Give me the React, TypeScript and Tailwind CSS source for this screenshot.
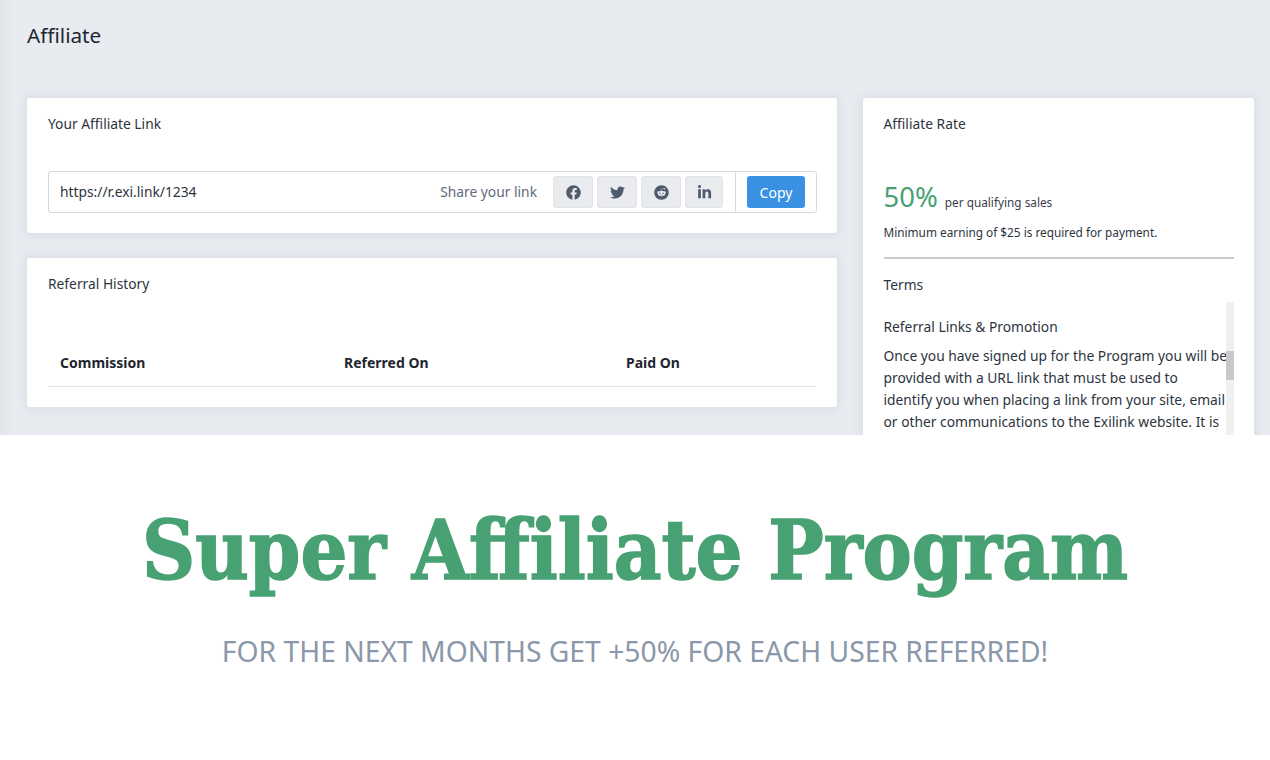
import { FaFacebook, FaLinkedinIn, FaReddit, FaTwitter } from "react-icons/fa";

const shareButtons = [
  { name: "facebook", icon: <FaFacebook className="h-[15px] w-[15px]" />, width: "w-10" },
  { name: "twitter", icon: <FaTwitter className="h-[15px] w-[15px]" />, width: "w-10" },
  { name: "reddit", icon: <FaReddit className="h-[15px] w-[15px]" />, width: "w-10" },
  { name: "linkedin", icon: <FaLinkedinIn className="h-[15px] w-[15px]" />, width: "w-[38px]" },
];

function Card({ title, className, children }: { title: string; className?: string; children: React.ReactNode }) {
  return (
    <div className={`rounded-[3px] bg-white pl-[21px] pr-[20px] shadow-[0_0_12px_rgba(100,116,139,0.14)] ${className ?? ""}`}>
      <h3 className="pt-[16px] text-[13.8px] leading-[20px] text-[#2d3440]">{title}</h3>
      {children}
    </div>
  );
}

export default function App() {
  return (
    <div className="h-[760px] w-[1270px] overflow-hidden bg-white font-['Noto_Sans',sans-serif]">
      <div className="h-[435px] overflow-hidden bg-gradient-to-r from-[#e1e5ea] from-0% to-[#e8ebf0] to-[1%] pl-[27px] pr-4">
        <h1 className="pt-[21px] text-[20.7px] leading-[28px] text-[#1f2630]">Affiliate</h1>
        <div className="mt-[49px] flex gap-[25.5px]">
          <div className="flex w-[810px] flex-col gap-[25px]">
            <Card title="Your Affiliate Link" className="h-[135px]">
              <div className="mt-[37px] flex h-[42px] items-center rounded-[3px] border border-[#d5d9e0] pl-[11px] pr-[11px]">
                <span className="text-[13.8px] text-[#2d3440]">https://r.exi.link/1234</span>
                <span className="ml-auto text-[13.8px] text-[#626b79]">Share your link</span>
                <div className="ml-[16px] flex gap-1">
                  {shareButtons.map((button) => (
                    <div
                      key={button.name}
                      className={`flex h-[32px] items-center justify-center rounded-[3px] border border-[#e0e3e8] bg-[#e9ebef] text-[#4f5a6d] ${button.width}`}
                    >
                      {button.icon}
                    </div>
                  ))}
                </div>
                <div className="ml-[12px] h-full w-px bg-[#d5d9e0]" />
                <div className="ml-[11px] flex h-[32px] w-[58px] items-center justify-center rounded-[3px] bg-[#3a91e3] text-[14px] text-white">
                  Copy
                </div>
              </div>
            </Card>
            <Card title="Referral History" className="h-[149px]">
              <div className="mr-px mt-[55px] grid h-[38px] grid-cols-[284px_282px_1fr] border-b border-[#dfe2e7] pl-3 text-[14px] font-bold leading-[28px] text-[#1f2630]">
                <span>Commission</span>
                <span>Referred On</span>
                <span>Paid On</span>
              </div>
            </Card>
          </div>
          <Card title="Affiliate Rate" className="h-[500px] w-[391.5px] shrink-0">
            <div className="mt-[43px] flex items-baseline">
              <span className="text-[27.5px] leading-[40px] text-[#48a172]">50%</span>
              <span className="ml-[7px] text-[11.8px] text-[#3a414d]">per qualifying sales</span>
            </div>
            <p className="mt-[6px] text-[11.8px] leading-[18px] text-[#2d3440]">Minimum earning of $25 is required for payment.</p>
            <div className="mt-[16px] h-0.5 bg-[#c8cbd1]" />
            <h4 className="mt-[16px] text-[13.8px] leading-[20px] text-[#2d3440]">Terms</h4>
            <div className="relative mt-[7px] h-[200px]">
              <div className="absolute right-0 top-0 h-full w-2 bg-[#f0f0f0]">
                <div className="mt-[49px] h-[29px] bg-[#c9c9c9]" />
              </div>
              <h5 className="pt-[15px] text-[13.8px] leading-[20px] text-[#2d3440]">Referral Links &amp; Promotion</h5>
              <p className="mt-[8px] w-[345px] text-[13.8px] leading-[22px] text-[#2d3440]">
                Once you have signed up for the Program you will be provided with a URL link that must be used to identify you when placing a link from your site, email or other communications to the Exilink website. It is
              </p>
            </div>
          </Card>
        </div>
      </div>
      <div className="flex flex-col items-center">
        <h2 className="mt-[69px] whitespace-nowrap font-['DejaVu_Serif_Condensed','DejaVu_Serif',serif] text-[82px] font-bold leading-[92px] text-[#48a172] [-webkit-text-stroke:1.5px_#48a172]">Super Affiliate Program</h2>
        <p className="mt-[37px] whitespace-nowrap text-[28.27px] leading-[36px] text-[#8a98a9]">FOR THE NEXT MONTHS GET +50% FOR EACH USER REFERRED!</p>
      </div>
    </div>
  );
}
